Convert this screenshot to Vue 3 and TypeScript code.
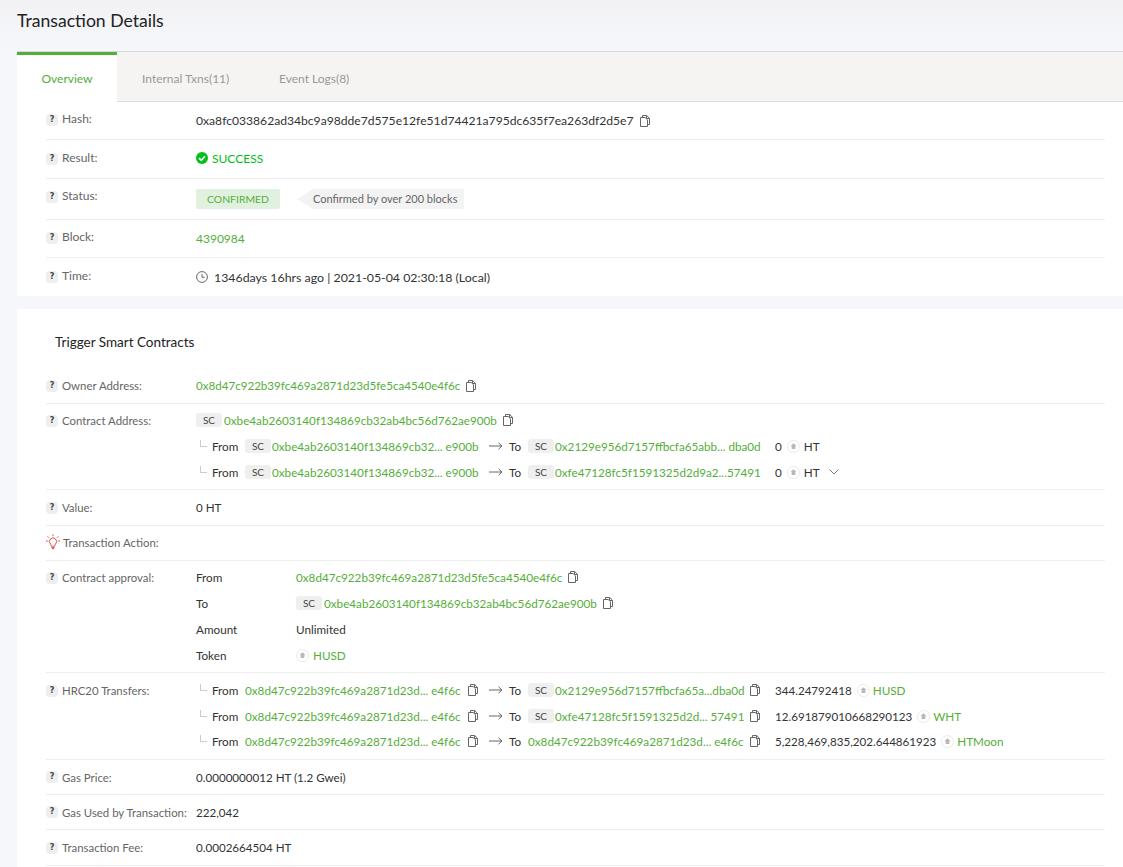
<template>
  <div class="page">
    <svg class="defs" width="0" height="0" aria-hidden="true">
      <symbol id="copy" viewBox="0 0 10 12">
        <path d="M2.5 2V.5h4.2L9.5 3.3v6.2h-2M6.5.5v3h3M.5 2.5h4.7l2.3 2.3v6.7H.5z" fill="none" stroke="#666" stroke-width="1" stroke-linejoin="round" />
      </symbol>
      <symbol id="token" viewBox="0 0 14 14">
        <circle cx="7" cy="7" r="6.5" fill="#fff" stroke="#e8e8e8" />
        <path d="M7 3.4 10.2 6.4H9v3.4H5V6.4H3.8z" fill="#b8b8b8" />
      </symbol>
    </svg>

    <h1 class="page-title">Transaction Details</h1>

    <section class="card overview">
      <div class="tabs">
        <span v-for="(tab, i) in tabs" :key="tab" class="tab" :class="{ active: i === 0 }">{{ tab }}</span>
      </div>

      <div class="rows">
        <div class="row h38">
          <div class="label"><span class="help">?</span>Hash:</div>
          <div class="value hash">
            0xa8fc033862ad34bc9a98dde7d575e12fe51d74421a795dc635f7ea263df2d5e7
            <svg class="copy"><use href="#copy" /></svg>
          </div>
        </div>
        <div class="row h39">
          <div class="label"><span class="help">?</span>Result:</div>
          <div class="value success">
            <svg class="check" viewBox="0 0 12 12">
              <circle cx="6" cy="6" r="6" fill="#00c01a" />
              <path d="M3 6.2 5.2 8.3 9 4.2" fill="none" stroke="#fff" stroke-width="1.6" />
            </svg>
            SUCCESS
          </div>
        </div>
        <div class="row h41">
          <div class="label"><span class="help">?</span>Status:</div>
          <div class="value">
            <span class="confirmed">CONFIRMED</span>
            <span class="hint">Confirmed by over 200 blocks</span>
          </div>
        </div>
        <div class="row h38">
          <div class="label"><span class="help">?</span>Block:</div>
          <div class="value link">4390984</div>
        </div>
        <div class="row h38 last">
          <div class="label"><span class="help">?</span>Time:</div>
          <div class="value time">
            <svg class="clock" viewBox="0 0 12 12">
              <circle cx="6" cy="6" r="5.4" fill="none" stroke="#666" />
              <path d="M6 3v3.3h2.6" fill="none" stroke="#666" />
            </svg>
            1346days 16hrs ago | 2021-05-04 02:30:18 (Local)
          </div>
        </div>
      </div>
    </section>

    <section class="card contracts">
      <h2>Trigger Smart Contracts</h2>

      <div class="row owner">
        <div class="label"><span class="help">?</span>Owner Address:</div>
        <div class="value">
          <span class="link">0x8d47c922b39fc469a2871d23d5fe5ca4540e4f6c</span>
          <svg class="copy"><use href="#copy" /></svg>
        </div>
      </div>

      <div class="row multi contract">
        <div class="label"><span class="help">?</span>Contract Address:</div>
        <div class="value stack">
          <div class="line">
            <span class="sc">SC</span>
            <span class="link spaced">0xbe4ab2603140f134869cb32ab4bc56d762ae900b</span>
            <svg class="copy"><use href="#copy" /></svg>
          </div>
          <div v-for="t in internal" :key="t.to" class="line transfer">
            <span class="corner"></span>
            <span class="word from">From</span>
            <span class="sc">SC</span>
            <span class="link addr-from">{{ t.from }}</span>
            <svg class="arrow" viewBox="0 0 14 8"><path d="M0 4h13M9.5.8 13 4 9.5 7.2" fill="none" stroke="#666" /></svg>
            <span class="word to">To</span>
            <span class="sc">SC</span>
            <span class="link addr-to-wide">{{ t.to }}</span>
            <span class="amount">0</span>
            <svg class="token"><use href="#token" /></svg>
            <span>HT</span>
            <svg v-if="t.more" class="chevron" viewBox="0 0 10 6">
              <path d="M.5.5 5 5 9.5.5" fill="none" stroke="#777" />
            </svg>
          </div>
        </div>
      </div>

      <div class="row value-row">
        <div class="label"><span class="help">?</span>Value:</div>
        <div class="value">0 HT</div>
      </div>

      <div class="row action-row">
        <div class="label">
          <svg class="bulb" viewBox="0 0 14 16">
            <path d="M4.6 10.2A3.6 3.6 0 1 1 9.4 10.2L8.6 12.2H5.4zM5.6 13.6h2.8L7 15.2zM7 .4v1.8M1.6 2.4l1.3 1.3M12.4 2.4l-1.3 1.3M0 7h1.8M12.2 7H14" fill="none" stroke="#d9534f" />
          </svg>
          Transaction Action:
        </div>
      </div>

      <div class="row multi approval">
        <div class="label"><span class="help">?</span>Contract approval:</div>
        <div class="value stack">
          <div class="line">
            <span class="key">From</span>
            <span class="link">0x8d47c922b39fc469a2871d23d5fe5ca4540e4f6c</span>
            <svg class="copy"><use href="#copy" /></svg>
          </div>
          <div class="line">
            <span class="key">To</span>
            <span class="sc">SC</span>
            <span class="link spaced">0xbe4ab2603140f134869cb32ab4bc56d762ae900b</span>
            <svg class="copy"><use href="#copy" /></svg>
          </div>
          <div class="line">
            <span class="key">Amount</span>
            <span>Unlimited</span>
          </div>
          <div class="line">
            <span class="key">Token</span>
            <svg class="token first"><use href="#token" /></svg>
            <span class="link">HUSD</span>
          </div>
        </div>
      </div>

      <div class="row multi hrc">
        <div class="label"><span class="help">?</span>HRC20 Transfers:</div>
        <div class="value stack">
          <div v-for="t in transfers" :key="t.symbol" class="line transfer">
            <span class="corner"></span>
            <span class="word from">From</span>
            <span class="link addr-owner">0x8d47c922b39fc469a2871d23d... e4f6c</span>
            <svg class="copy"><use href="#copy" /></svg>
            <svg class="arrow" viewBox="0 0 14 8"><path d="M0 4h13M9.5.8 13 4 9.5 7.2" fill="none" stroke="#666" /></svg>
            <span class="word to">To</span>
            <span v-if="t.sc" class="sc">SC</span>
            <span class="link" :class="t.sc ? 'addr-to' : 'addr-owner-to'">{{ t.to }}</span>
            <svg class="copy"><use href="#copy" /></svg>
            <span class="amount token-amount">{{ t.amount }}</span>
            <svg class="token tight"><use href="#token" /></svg>
            <span class="link">{{ t.symbol }}</span>
          </div>
        </div>
      </div>

      <div class="row h35">
        <div class="label"><span class="help">?</span>Gas Price:</div>
        <div class="value">0.0000000012 HT (1.2 Gwei)</div>
      </div>
      <div class="row h35">
        <div class="label"><span class="help">?</span>Gas Used by Transaction:</div>
        <div class="value">222,042</div>
      </div>
      <div class="row h36">
        <div class="label"><span class="help">?</span>Transaction Fee:</div>
        <div class="value">0.0002664504 HT</div>
      </div>
    </section>
  </div>
</template>

<script setup lang="ts">
interface InternalTransfer {
  from: string
  to: string
  more: boolean
}

interface TokenTransfer {
  sc: boolean
  to: string
  amount: string
  symbol: string
}

const tabs: string[] = ['Overview', 'Internal Txns(11)', 'Event Logs(8)']

const internal: InternalTransfer[] = [
  { from: '0xbe4ab2603140f134869cb32... e900b', to: '0x2129e956d7157ffbcfa65abb... dba0d', more: false },
  { from: '0xbe4ab2603140f134869cb32... e900b', to: '0xfe47128fc5f1591325d2d9a2...57491', more: true }
]

const transfers: TokenTransfer[] = [
  { sc: true, to: '0x2129e956d7157ffbcfa65a...dba0d', amount: '344.24792418', symbol: 'HUSD' },
  { sc: true, to: '0xfe47128fc5f1591325d2d... 57491', amount: '12.691879010668290123', symbol: 'WHT' },
  { sc: false, to: '0x8d47c922b39fc469a2871d23d... e4f6c', amount: '5,228,469,835,202.644861923', symbol: 'HTMoon' }
]
</script>

<style>
html,
body {
  margin: 0;
  background: #f5f7fa;
}
</style>

<style scoped>
.page {
  height: 867px;
  overflow: hidden;
  padding-left: 17px;
  box-sizing: border-box;
  background: linear-gradient(180deg, #f2f2f5 0, #f5f7fa 50px);
  color: #333;
  font-family: Lato, "Liberation Sans", sans-serif;
  font-size: 12px;
}

.defs {
  position: absolute;
}

.page-title {
  margin: 0;
  height: 51px;
  padding-top: 9px;
  box-sizing: border-box;
  color: #222;
  font-size: 17.6px;
  font-weight: 400;
  line-height: 23px;
}

.card {
  background: #fff;
}

.overview {
  height: 245px;
  border-top: 1px solid #d9d9d9;
  box-sizing: border-box;
}

.tabs {
  display: flex;
  height: 50px;
  border-bottom: 1px solid #ddd;
  box-sizing: border-box;
  background: #f5f4f2;
}

.tab {
  width: 100px;
  margin-right: 25px;
  padding-top: 3px;
  box-sizing: border-box;
  color: #999;
  line-height: 47px;
  text-align: center;
  white-space: nowrap;
}

.tab:nth-child(2) {
  width: 87px;
  margin-right: 50px;
}

.tab:nth-child(3) {
  width: 69px;
}

.tab.active {
  height: 50px;
  border-top: 3px solid #55ae3a;
  padding-top: 0;
  background: #fff;
  color: #55ae3a;
}

.rows,
.contracts {
  padding: 0 18px 0 29px;
}

.row {
  display: flex;
  align-items: center;
  border-bottom: 1px solid #eee;
  box-sizing: border-box;
}

.h35 {
  height: 35px;
}

.h36 {
  height: 36px;
}

.h38 {
  height: 38px;
}

.h39 {
  height: 39px;
}

.h41 {
  height: 41px;
}

.last {
  border-bottom: 0;
}

.label {
  display: flex;
  align-items: center;
  flex: 0 0 150px;
  color: #666;
  white-space: nowrap;
}

.rows .label {
  align-items: flex-start;
  margin-bottom: 4px;
}

.rows .h41 .label {
  margin-bottom: 8px;
}

.rows .help {
  margin-top: 3px;
}

.contracts .label {
  font-size: 11.4px;
}

.help {
  width: 12px;
  height: 12px;
  margin-right: 4px;
  border-radius: 4px;
  background: #eee;
  color: #444;
  font-family: "DejaVu Sans", sans-serif;
  font-size: 8px;
  font-weight: 700;
  line-height: 12px;
  text-align: center;
}

.value {
  display: flex;
  align-items: center;
  color: #333;
  white-space: nowrap;
}

.contracts .value {
  font-size: 11.6px;
}

.link {
  color: #55ae3a;
}

.hash {
  font-size: 12.14px;
}

.time {
  font-size: 12.36px;
}

.copy {
  flex: none;
  width: 10px;
  height: 12px;
  margin-left: 6px;
}

.success {
  margin-bottom: 2px;
  color: #00c01a;
}

.check {
  width: 12px;
  height: 12px;
  margin-right: 4px;
}

.confirmed {
  width: 84px;
  height: 20px;
  border-radius: 2px;
  background: #e1f1df;
  color: #55ae3a;
  font-size: 10.4px;
  line-height: 20px;
  text-align: center;
}

.hint {
  position: relative;
  height: 20px;
  margin-left: 33px;
  padding: 0 7px 0 0;
  border-radius: 0 2px 2px 0;
  background: #f3f3f3;
  color: #666;
  font-size: 11px;
  line-height: 20px;
}

.hint::before {
  content: "";
  position: absolute;
  top: 0;
  left: -16px;
  width: 16px;
  height: 20px;
  background: #f3f3f3;
  clip-path: polygon(100% 0, 100% 100%, 0 50%);
}

.clock {
  width: 12px;
  height: 12px;
  margin-right: 6px;
}

.contracts {
  height: 558px;
  margin-top: 13px;
}

.contracts h2 {
  margin: 0;
  padding: 24px 0 0 9px;
  height: 59px;
  box-sizing: border-box;
  color: #222;
  font-size: 13.5px;
  font-weight: 400;
  line-height: 18px;
}

.owner {
  height: 36px;
}

.multi {
  align-items: flex-start;
}

.multi .label {
  height: 26px;
  margin-top: 1px;
  line-height: 26px;
}

.stack {
  display: block;
}

.line {
  display: flex;
  align-items: center;
  height: 26px;
  font-size: 11.7px;
}

.sc {
  flex: none;
  width: 26px;
  height: 14px;
  margin-right: 1px;
  border-radius: 3px;
  background: #efefef;
  color: #444;
  font-size: 10px;
  line-height: 14px;
  text-align: center;
}

.spaced {
  margin-left: 1px;
}

.contract {
  height: 86px;
  padding-top: 3px;
}

.value-row {
  height: 36px;
}

.action-row {
  height: 35px;
}

.action-row .label {
  margin-bottom: 2px;
}

.approval {
  height: 112px;
  padding-top: 3px;
}

.hrc {
  height: 87px;
  padding-top: 4px;
}

.hrc .line:last-child {
  margin-top: -1px;
}

.corner {
  flex: none;
  width: 7px;
  height: 7px;
  margin: -5px 0 0 4px;
  border-left: 1px solid #ccc;
  border-bottom: 1px solid #ccc;
  box-sizing: border-box;
}

.word {
  flex: none;
}

.from {
  width: 33px;
  margin-left: 5px;
}

.to {
  width: 19px;
}

.arrow {
  flex: none;
  width: 14px;
  height: 8px;
  margin: 0 6px 0 11px;
}

.addr-from,
.addr-to-wide {
  width: 206px;
}

.addr-owner {
  width: 217px;
}

.addr-to {
  width: 189px;
}

.addr-owner-to {
  width: 216px;
}

.amount {
  margin-left: 14px;
}

.token-amount {
  margin-left: 15px;
  font-size: 11.6px;
}

.token {
  flex: none;
  width: 13px;
  height: 13px;
  margin: 0 4px 0 5px;
}

.token.tight {
  margin-right: 3px;
}

.token.first {
  margin-left: 0;
}

.chevron {
  width: 10px;
  height: 6px;
  margin-left: 9px;
}

.key {
  flex: none;
  width: 100px;
}

.bulb {
  width: 14px;
  height: 16px;
  margin-right: 3px;
}
</style>
